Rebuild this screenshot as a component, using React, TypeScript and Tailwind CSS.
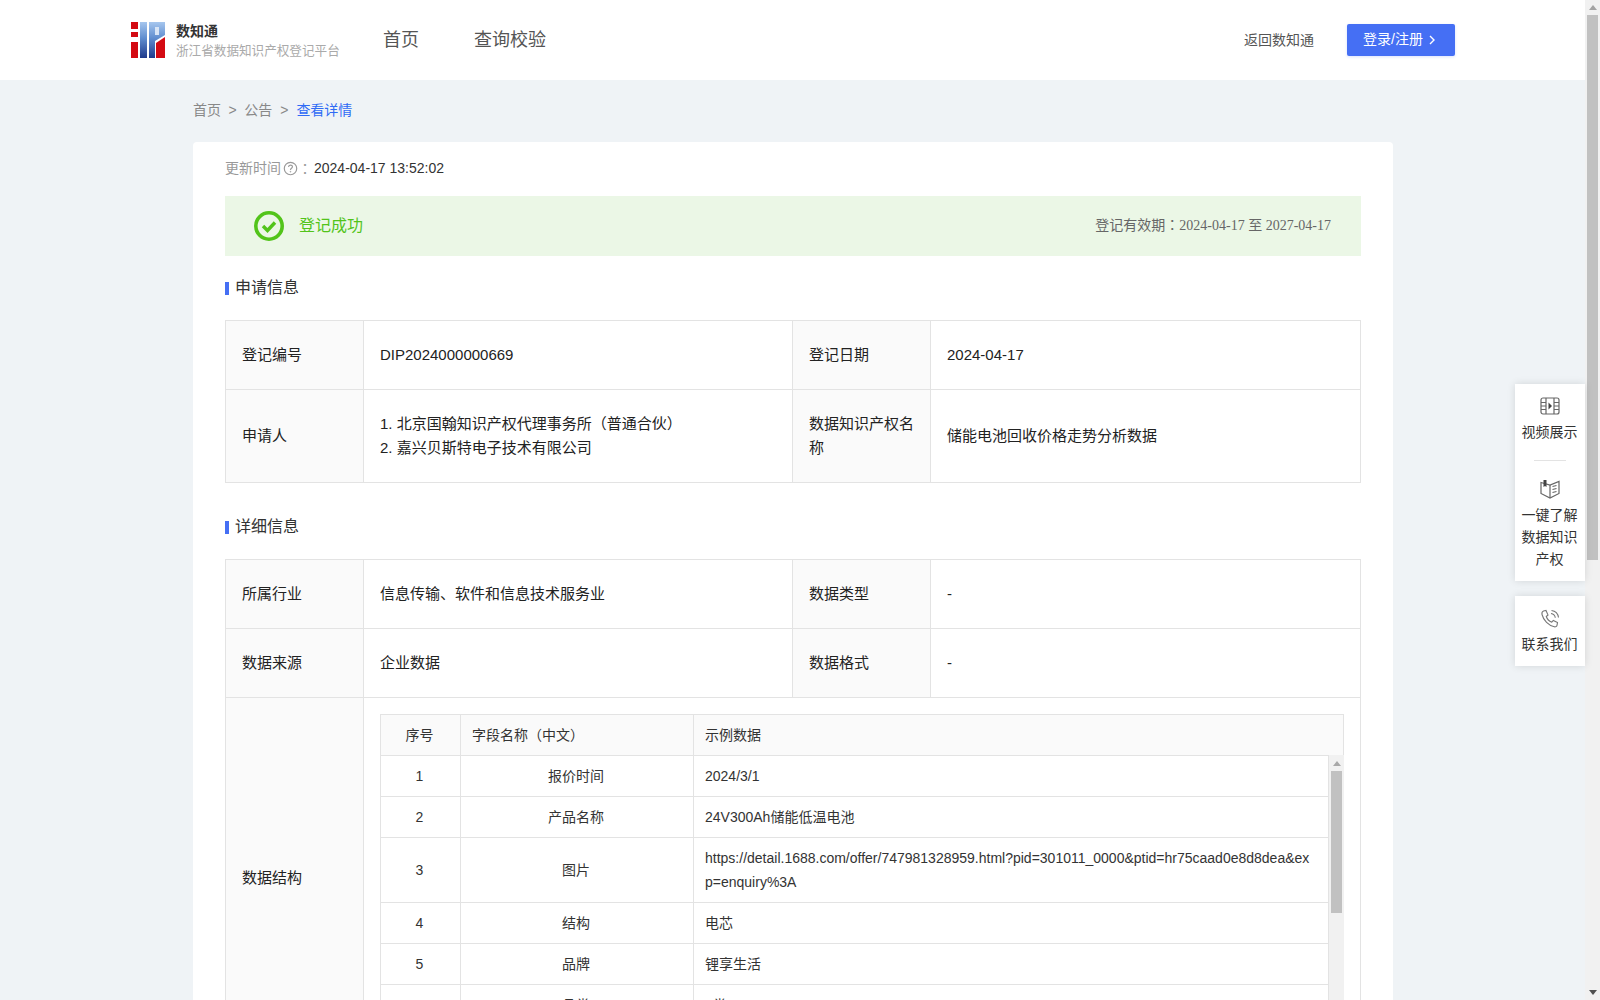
import React from "react";

const FONT = "font-['Arial','Liberation_Sans','Noto_Sans_CJK_SC',sans-serif]";

function Logo() {
  return (
    <svg width="34" height="36" viewBox="0 0 34 36" className="shrink-0">
      <defs>
        <linearGradient id="lg" x1="0" y1="0" x2="0" y2="1">
          <stop offset="0" stopColor="#a6c6ee" />
          <stop offset="0.45" stopColor="#5f8dcf" />
          <stop offset="1" stopColor="#1f3a8c" />
        </linearGradient>
      </defs>
      <path d="M0 0h7v7H0zM0 10h7v5H0zM0 20h7v16H0z" fill="#d40a12" />
      <rect x="9" y="0" width="7" height="36" fill="url(#lg)" />
      <path d="M18 0h16v13l-10 6v17h-6z" fill="url(#lg)" />
      <rect x="24" y="5" width="4" height="8" fill="#d8e5f6" />
      <path d="M25 36V21l9-6v21z" fill="#d40a12" />
    </svg>
  );
}

function Chevron() {
  return (
    <svg width="6" height="10" viewBox="0 0 6 10" fill="none" stroke="#fff" strokeWidth="1.4">
      <path d="M1 1l4 4-4 4" />
    </svg>
  );
}

function Section({ title }: { title: string }) {
  return (
    <div className="flex items-center gap-[6px] h-[20px] text-[16px] text-[#333]">
      <span className="w-[4px] h-[13px] bg-[#456ff4] mt-[2px]" />
      <span className="mt-[1px]">{title}</span>
    </div>
  );
}

function Label({ children }: { children: React.ReactNode }) {
  return (
    <td className="w-[138px] bg-[#fafafa] border border-[#e3e3e3] px-[16px] text-[15px] leading-[24px] text-[#222]">
      {children}
    </td>
  );
}

function Val({ children }: { children: React.ReactNode }) {
  return (
    <td className="border border-[#e3e3e3] px-[16px] text-[15px] leading-[24px] text-[#222]">{children}</td>
  );
}

function Inner() {
  const rows: [string, string, string, string][] = [
    ["1", "报价时间", "2024/3/1", "h-[41px]"],
    ["2", "产品名称", "24V300Ah储能低温电池", "h-[41px]"],
    [
      "3",
      "图片",
      "https://detail.1688.com/offer/747981328959.html?pid=301011_0000&ptid=hr75caad0e8d8dea&exp=enquiry%3A",
      "h-[65px]",
    ],
    ["4", "结构", "电芯", "h-[41px]"],
    ["5", "品牌", "锂享生活", "h-[41px]"],
    ["6", "品类", "5类", "h-[41px]"],
  ];
  const c = "border border-[#e3e3e3] text-[14px] leading-[24px] text-[#333]";
  return (
    <div className="relative h-[328px] overflow-hidden">
      <table className="w-[964px] border-collapse table-fixed">
        <colgroup>
          <col className="w-[80px]" />
          <col className="w-[233px]" />
          <col />
        </colgroup>
        <thead>
          <tr className="h-[41px] bg-[#fafafa]">
            <th className={`${c} font-normal text-center pr-[2px]`}>序号</th>
            <th className={`${c} font-normal text-left pl-[11px]`}>字段名称（中文）</th>
            <th className={`${c} font-normal text-left pl-[11px]`}>示例数据</th>
          </tr>
        </thead>
        <tbody>
          {rows.map((r) => (
            <tr key={r[0]} className={r[3]}>
              <td className={`${c} text-center pr-[2px]`}>{r[0]}</td>
              <td className={`${c} text-center pr-[2px]`}>{r[1]}</td>
              <td className={`${c} pl-[11px] pr-[27px] break-all`}>{r[2]}</td>
            </tr>
          ))}
        </tbody>
      </table>
      {/* inner scrollbar */}
      <div className="absolute right-0 top-[41px] bottom-0 w-[16px] bg-[#f1f1f1] border-l border-[#e3e3e3] flex flex-col items-center">
        <div className="h-[16px] flex items-center justify-center">
          <svg width="8" height="5" viewBox="0 0 8 5"><path d="M4 0 8 5H0z" fill="#a8a8a8" /></svg>
        </div>
        <div className="w-[11px] h-[142px] bg-[#c1c1c1]" />
      </div>
    </div>
  );
}

function SideItem({ icon, lines, gap }: { icon: React.ReactNode; lines: string[]; gap: string }) {
  return (
    <div className="flex flex-col items-center text-[14px] leading-[22px] text-[#333]">
      {icon}
      <div className={`${gap} text-center pr-[1px]`}>
        {lines.map((l) => (
          <div key={l}>{l}</div>
        ))}
      </div>
    </div>
  );
}

export default function App() {
  return (
    <div className={`flex h-[1000px] w-[1600px] overflow-hidden relative ${FONT} bg-[#eff3f6]`}>
      <div className="w-[1585px] h-full overflow-hidden">
        {/* header */}
        <header className="h-[80px] bg-white flex items-center pl-[131px] pr-[130px]">
          <Logo />
          <div className="ml-[11px] w-[198px]">
            <div className="text-[14px] leading-[20px] font-bold text-[#333]">数知通</div>
            <div className="text-[12.6px] leading-[18px] mt-[1px] text-[#aaa] whitespace-nowrap">浙江省数据知识产权登记平台</div>
          </div>
          <nav className="ml-[9px] flex gap-[55px] text-[18px] text-[#555]">
            <span>首页</span>
            <span>查询校验</span>
          </nav>
          <div className="ml-auto flex items-center gap-[33px]">
            <span className="text-[14px] text-[#555]">返回数知通</span>
            <button className="w-[108px] h-[32px] rounded-[2px] bg-[#456ff4] text-white text-[14px] flex items-center justify-center gap-[6px] pr-[4px] pb-[1px] shadow-[0_1px_3px_rgba(69,111,244,0.2)]">
              登录/注册
              <Chevron />
            </button>
          </div>
        </header>

        <main className="w-[1200px] ml-[193px]">
          {/* breadcrumb */}
          <div className="h-[62px] flex items-center text-[14px] text-[#888] pb-[2px]">
            <span>首页</span>
            <span className="mx-[7.5px]">&gt;</span>
            <span>公告</span>
            <span className="mx-[8px]">&gt;</span>
            <span className="text-[#2f6bf5]">查看详情</span>
          </div>

          {/* card */}
          <div className="bg-white rounded-[4px] px-[32px] pt-[16px] pb-[40px]">
            <div className="h-[20px] flex items-center text-[14px] text-[#999]">
              <span>更新时间</span>
              <svg width="15" height="15" viewBox="0 0 14 14" fill="none" className="ml-[2px]" stroke="#999">
                <circle cx="7" cy="7" r="5.8" strokeWidth="1.1" />
                <path d="M5.2 5.600c0-2.300 3.600-2.300 3.600-.2 0 1.400-1.800 1.400-1.800 2.900" strokeWidth="1.1" />
                <circle cx="7" cy="10" r=".4" fill="#999" strokeWidth=".6" />
              </svg>
              <span className="font-['Noto_Sans_CJK_TC',sans-serif]">：</span>
              <span className="text-[#333] ml-[2px]">2024-04-17 13:52:02</span>
            </div>

            <div className="mt-[18px] h-[60px] bg-[#ebf7e6] flex items-center pl-[29px] pr-[30px]">
              <svg width="30" height="30" viewBox="0 0 30 30" fill="none">
                <circle cx="15" cy="15" r="13.2" stroke="#52c41a" strokeWidth="3.600" />
                <path d="M9 15l4.500 4.500 7.500-8" stroke="#52c41a" strokeWidth="3.400" />
              </svg>
              <span className="ml-[15px] text-[16px] text-[#52c41a]">登记成功</span>
              <span className="ml-auto mb-[2px] text-[14px] text-[#666] font-['Liberation_Serif','Noto_Sans_CJK_SC',serif]">
                <span className="font-['Liberation_Sans','Noto_Sans_CJK_TC',sans-serif]">登记有效期：</span>
                2024-04-17 <span className="font-['Liberation_Sans','Noto_Sans_CJK_SC',sans-serif]">至</span> 2027-04-17
              </span>
            </div>

            <div className="mt-[21px]">
              <Section title="申请信息" />
            </div>

            <table className="mt-[23px] w-[1136px] border-collapse table-fixed">
              <colgroup>
                <col className="w-[138px]" />
                <col className="w-[429px]" />
                <col className="w-[138px]" />
                <col />
              </colgroup>
              <tbody>
                <tr className="h-[69px]">
                  <Label>登记编号</Label>
                  <Val>DIP2024000000669</Val>
                  <Label>登记日期</Label>
                  <Val>2024-04-17</Val>
                </tr>
                <tr className="h-[93px]">
                  <Label>申请人</Label>
                  <Val>
                    <div>1. 北京国翰知识产权代理事务所（普通合伙）</div>
                    <div>2. 嘉兴贝斯特电子技术有限公司</div>
                  </Val>
                  <Label>数据知识产权名称</Label>
                  <Val>储能电池回收价格走势分析数据</Val>
                </tr>
              </tbody>
            </table>

            <div className="mt-[33px]">
              <Section title="详细信息" />
            </div>

            <table className="mt-[23px] w-[1136px] border-collapse table-fixed">
              <colgroup>
                <col className="w-[138px]" />
                <col className="w-[429px]" />
                <col className="w-[138px]" />
                <col />
              </colgroup>
              <tbody>
                <tr className="h-[69px]">
                  <Label>所属行业</Label>
                  <Val>信息传输、软件和信息技术服务业</Val>
                  <Label>数据类型</Label>
                  <Val>-</Val>
                </tr>
                <tr className="h-[69px]">
                  <Label>数据来源</Label>
                  <Val>企业数据</Val>
                  <Label>数据格式</Label>
                  <Val>-</Val>
                </tr>
                <tr>
                  <Label>数据结构</Label>
                  <td colSpan={3} className="border border-[#e3e3e3] p-[16px]">
                    <Inner />
                  </td>
                </tr>
              </tbody>
            </table>
          </div>
        </main>
      </div>

      {/* page scrollbar */}
      <div className="w-[15px] h-full bg-[#f1f1f1] flex flex-col items-center">
        <div className="h-[15px] flex items-center justify-center">
          <svg width="8" height="5" viewBox="0 0 8 5"><path d="M4 0 8 5H0z" fill="#a3a3a3" /></svg>
        </div>
        <div className="w-[11px] h-[545px] bg-[#c1c1c1]" />
        <div className="mt-auto h-[15px] flex items-center justify-center">
          <svg width="8" height="5" viewBox="0 0 8 5"><path d="M0 0h8L4 5z" fill="#505050" /></svg>
        </div>
      </div>

      {/* floating side panel */}
      <div className="absolute left-[1515px] top-[384px] w-[70px] flex flex-col gap-[15px]">
        <div className="h-[197px] bg-white shadow-[0_0_8px_rgba(0,0,0,0.12)] pt-[13px] flex flex-col items-center">
          <SideItem
            gap="mt-[6px]"
            lines={["视频展示"]}
            icon={
              <svg width="20" height="18" viewBox="0 0 20 18" fill="none" stroke="#666" strokeWidth="1.2">
                <rect x="1" y="1" width="18" height="16" rx="2" />
                <path d="M6 1v16M14 1v16M1 5.500h5M1 9h5M1 12.500h5M14 5.500h5M14 9h5M14 12.500h5" />
                <path d="M8.500 5.500 12 9l-3.500 3.500z" fill="#444" stroke="none" />
              </svg>
            }
          />
          <div className="w-[32px] h-px bg-[#e3e3e3] mt-[17px] mb-[18px]" />
          <SideItem
            gap="mt-[5px]"
            lines={["一键了解", "数据知识", "产权"]}
            icon={
              <svg width="20" height="20" viewBox="0 0 20 20" fill="none" stroke="#666" strokeWidth="1.2">
                <path d="M1 3.500 10 6l9-3.500v12L10 19 1 14.500z" />
                <path d="M10 6v13M12.500 7.500l4-1M12.500 10.500l4-1M12.500 13.500l4-1" />
                <path d="M3.500 1h3v7l-1.500-1-1.500 1z" fill="#444" stroke="none" />
              </svg>
            }
          />
        </div>
        <div className="h-[70px] bg-white shadow-[0_0_8px_rgba(0,0,0,0.12)] pt-[13px] flex flex-col items-center">
          <SideItem
            gap="mt-[4px]"
            lines={["联系我们"]}
            icon={
              <svg width="20" height="20" viewBox="0 0 20 20" fill="none" stroke="#777" strokeWidth="1.1">
                <path d="M3.500 2 6 1.500 8 6 6.300 7.500c.8 2.500 3 4.700 5.500 5.700l1.500-1.700 4.200 2-.5 2.800c-.3 1.200-1.500 1.800-2.700 1.500C8.500 16.500 3.500 11.500 2 5.500 1.700 4 2.300 2.500 3.500 2z" />
                <path d="M11 4.500c2.200.3 4 2 4.300 4.300M11.500 1.500c3.700.5 6.500 3.200 7 7" />
              </svg>
            }
          />
        </div>
      </div>
    </div>
  );
}
